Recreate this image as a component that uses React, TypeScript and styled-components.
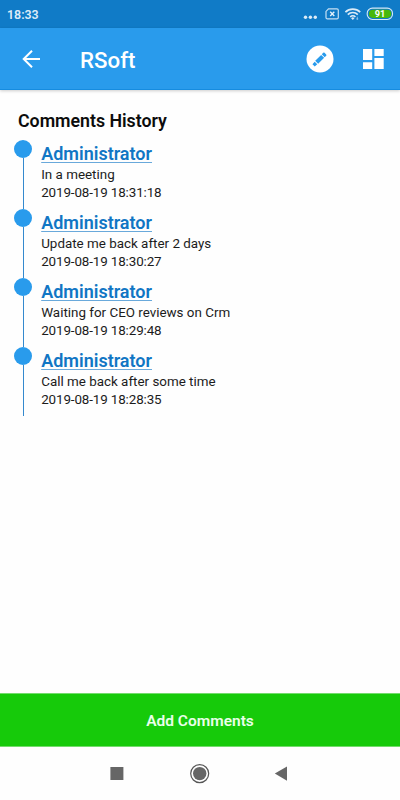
import React from "react";
import styled, { createGlobalStyle } from "styled-components";

const GlobalStyle = createGlobalStyle`
  * { box-sizing: border-box; }
  body { margin: 0; background: #fff; font-family: Roboto, sans-serif; }
`;

const Screen = styled.div`
  width: 400px;
  height: 800px;
  display: flex;
  flex-direction: column;
  overflow: hidden;
  background: #fefefe;
`;

const StatusBar = styled.div`
  height: 28px;
  flex: none;
  display: flex;
  align-items: center;
  justify-content: space-between;
  padding-left: 7px;
  background: #107bc7;
`;

const Clock = styled.span`
  font-size: 12.4px;
  font-weight: 600;
  line-height: 28px;
  padding-top: 1px;
  color: #dcebf7;
`;

const Toolbar = styled.header`
  height: 62px;
  flex: none;
  display: flex;
  align-items: center;
  background: #299bec;
  border-bottom: 1px solid #168ce0;
  box-shadow: 0 1px 3px rgba(0, 0, 0, 0.2);
`;

const IconButton = styled.button<{ $left: number; $size: number }>`
  display: flex;
  flex: none;
  width: ${(p) => p.$size}px;
  height: ${(p) => p.$size}px;
  margin: 0 0 0 ${(p) => p.$left}px;
  padding: 0;
  border: 0;
  background: none;
`;

const AppTitle = styled.h1`
  width: 180px;
  margin: 3px 0 0 32px;
  font-size: 22.3px;
  line-height: 28px;
  font-weight: 500;
  color: #fff;
`;

const Content = styled.main`
  flex: 1;
  padding: 20px 14px 0;
`;

const Heading = styled.h2`
  margin: 0 0 9px 4px;
  font-size: 17.8px;
  line-height: 22px;
  font-weight: 600;
  letter-spacing: -0.02px;
  color: #0c0c0c;
`;

const Timeline = styled.ol`
  margin: 0;
  padding: 0;
  list-style: none;
`;

const Entry = styled.li`
  display: flex;
  height: 69px;
`;

const Rail = styled.div`
  width: 18px;
  margin: -0.6px 9px 0.6px 0.2px;
  display: flex;
  flex-direction: column;
  align-items: center;
`;

const Dot = styled.span`
  width: 18px;
  height: 18px;
  flex: none;
  border-radius: 50%;
  background: #299bec;
`;

const Line = styled.span`
  width: 1px;
  flex: 1;
  background: #3489ce;
`;

const Author = styled.a`
  display: block;
  width: max-content;
  height: 23px;
  margin-bottom: 2px;
  font-size: 18px;
  line-height: 26px;
  font-weight: 600;
  color: #1176c4;
  text-decoration: underline;
  text-decoration-color: #69a9db;
  text-decoration-thickness: 1px;
  text-underline-offset: 2px;
`;

const Text = styled.p<{ $spacing: number }>`
  margin: 0;
  font-size: 13.4px;
  line-height: 18px;
  letter-spacing: ${(p) => p.$spacing}px;
  color: #1c1c1c;
`;

const AddButton = styled.button`
  height: 54px;
  flex: none;
  padding: 1px 0 0;
  border: solid #73dc6c;
  border-width: 1px 0;
  background: #16ca0a;
  font-family: inherit;
  font-size: 15.5px;
  font-weight: 600;
  color: #eaffea;
`;

const NavBar = styled.nav`
  height: 53px;
  flex: none;
`;

const comments = [
  { text: "In a meeting", time: "2019-08-19 18:31:18" },
  { text: "Update me back after 2 days", time: "2019-08-19 18:30:27" },
  { text: "Waiting for CEO reviews on Crm", time: "2019-08-19 18:29:48" },
  { text: "Call me back after some time", time: "2019-08-19 18:28:35" },
];

const StatusIcons = () => (
  <svg width="100" height="28" viewBox="300 0 100 28" fill="none">
    <g fill="#dcebf7">
      <circle cx="305.5" cy="17.3" r="1.7" />
      <circle cx="310.4" cy="17.3" r="1.7" />
      <circle cx="315.3" cy="17.3" r="1.7" />
    </g>
    <path d="M328.5 8.9H337a1.3 1.3 0 0 1 1.3 1.3v7.3a1.3 1.3 0 0 1-1.3 1.3h-9.7a1.3 1.3 0 0 1-1.3-1.3v-6.1z" stroke="#c5dff3" strokeWidth="1.2" />
    <path d="M330.2 11.8l4.1 4.1m0-4.1l-4.1 4.1" stroke="#e4f1fb" strokeWidth="1.4" />
    <g stroke="#dcebf7" strokeWidth="1.7">
      <path d="M345.4 12.1a10.5 10.5 0 0 1 14.8 0" />
      <path d="M347.8 14.6a7 7 0 0 1 10 0" />
      <path d="M350.2 17a3.7 3.7 0 0 1 5.2 0" />
    </g>
    <path d="M351.1 18.2a2.4 2.4 0 0 1 3.4 0l-1.7 1.9z" fill="#dcebf7" />
    <path d="M357.3 16.7v3.2m-1-1h2" stroke="#9dcbed" strokeWidth=".8" />
    <rect x="367.2" y="8.1" width="25.3" height="11.4" rx="5.2" stroke="#d4e9f5" strokeWidth="1.1" />
    <path d="M373 9.7h14.2a4.1 4.1 0 0 1 0 8.2H373a4.1 4.1 0 0 1 0-8.2z" fill="#47b80b" />
    <text x="380" y="17.2" textAnchor="middle" fontFamily="Roboto, sans-serif" fontWeight="700" fontSize="9.2" fill="#fff">91</text>
  </svg>
);

export default function App() {
  return (
    <>
      <GlobalStyle />
      <Screen>
        <StatusBar>
          <Clock>18:33</Clock>
          <StatusIcons />
        </StatusBar>
        <Toolbar>
          <IconButton $left={20} $size={28} aria-label="Back">
            <svg width="28" height="28" viewBox="20 45 28 28" fill="none">
              <path d="M40 59H23.6M32 50.7L23.7 59l8.3 8.3" stroke="#fff" strokeWidth="2" />
            </svg>
          </IconButton>
          <AppTitle>RSoft</AppTitle>
          <IconButton $left={46} $size={28} aria-label="Edit">
            <svg width="28" height="28" viewBox="306 45 28 28">
              <circle cx="320" cy="59" r="13.5" fill="#fff" />
              <g transform="translate(319.8 59.2) rotate(-45)" fill="#299bec">
                <rect x="-4.4" y="-2.1" width="8.4" height="4.2" />
                <path d="M-5.4-1.8v3.6l-3.4-.2v-3.2zM4.9-2.1h2a1 1 0 0 1 1 1v2.2a1 1 0 0 1-1 1h-2z" />
              </g>
            </svg>
          </IconButton>
          <IconButton $left={25} $size={28} aria-label="Dashboard">
            <svg width="28" height="28" viewBox="359 45 28 28" fill="#fff">
              <path d="M363 49h9.2v11H363zM374.4 49h9.3v6.9h-9.3zM363 62.2h9.2V69H363zM374.4 58h9.3v11h-9.3z" />
            </svg>
          </IconButton>
        </Toolbar>
        <Content>
          <Heading>Comments History</Heading>
          <Timeline>
            {comments.map((c) => (
              <Entry key={c.time}>
                <Rail>
                  <Dot />
                  <Line />
                </Rail>
                <div>
                  <Author>Administrator</Author>
                  <Text $spacing={0}>{c.text}</Text>
                  <Text $spacing={-0.12}>{c.time}</Text>
                </div>
              </Entry>
            ))}
          </Timeline>
        </Content>
        <AddButton>Add Comments</AddButton>
        <NavBar>
          <svg width="400" height="53" viewBox="0 747 400 53" fill="#666">
            <rect x="110.4" y="767" width="13" height="13" />
            <circle cx="199.7" cy="773.6" r="9" fill="none" stroke="#555" strokeWidth="1.2" />
            <circle cx="199.7" cy="773.6" r="6.7" />
            <path d="M274.8 773.5L287 766.5v14.2z" />
          </svg>
        </NavBar>
      </Screen>
    </>
  );
}
